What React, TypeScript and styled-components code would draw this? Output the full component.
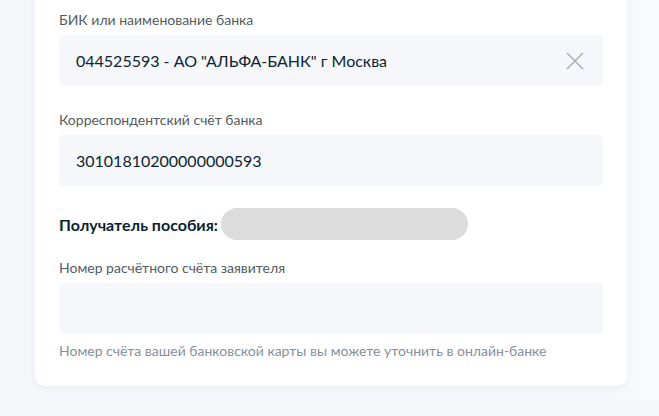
import React from 'react';
import styled, { createGlobalStyle } from 'styled-components';

const GlobalStyle = createGlobalStyle`
  html, body {
    margin: 0;
    padding: 0;
    background: #f4f6fa;
    font-family: Lato, "Noto Sans", sans-serif;
    overflow: hidden;
  }
`;

const Page = styled.div`
  height: 416px;
  padding-left: 35px;
  background: linear-gradient(90deg, #f4f6fa 0%, #f5f7fb 92%, #f8fafd 100%);
`;

const Card = styled.div`
  width: 592px;
  box-sizing: border-box;
  margin-top: -16px;
  padding: 26px 24px 25px;
  background: #fff;
  border-radius: 10px;
  box-shadow: 0 2px 6px rgba(40, 60, 100, 0.06);
  display: flex;
  flex-direction: column;
`;

const Label = styled.div`
  font-size: 14px;
  line-height: 20px;
  color: #535b63;
  margin-bottom: 5px;
`;

const Field = styled.div<{ $mb?: number }>`
  height: 51px;
  box-sizing: border-box;
  padding: 0 16px 0 17px;
  background: #f5f7fa;
  border-radius: 4px;
  display: flex;
  align-items: center;
  justify-content: space-between;
  margin-bottom: ${(p) => p.$mb ?? 0}px;
`;

const Value = styled.span`
  font-size: 16px;
  color: #0b1f33;
`;

const ClearButton = styled.button`
  border: none;
  background: transparent;
  padding: 0;
  width: 24px;
  height: 24px;
  display: flex;
  align-items: center;
  justify-content: center;
  cursor: pointer;
`;

const Recipient = styled.div`
  display: flex;
  align-items: center;
  height: 32px;
  margin-bottom: 18px;
`;

const RecipientTitle = styled.span`
  font-size: 16px;
  font-weight: 700;
  color: #0b1f33;
  margin-right: 3px;
`;

const Hidden = styled.span`
  width: 247px;
  height: 32px;
  border-radius: 16px;
  background: #dcdcdc;
`;

const Hint = styled.div`
  margin-top: 7px;
  font-size: 14px;
  line-height: 20px;
  color: #86909c;
`;

export default function App() {
  return (
    <>
      <GlobalStyle />
      <Page>
        <Card>
          <Label>БИК или наименование банка</Label>
          <Field $mb={24}>
            <Value>044525593 - АО "АЛЬФА-БАНК" г Москва</Value>
            <ClearButton aria-label="Очистить">
              <svg width="18" height="18" viewBox="0 0 18 18" fill="none">
                <path d="M1 1L17 17M17 1L1 17" stroke="#a3abb5" strokeWidth="1.4" />
              </svg>
            </ClearButton>
          </Field>
          <Label>Корреспондентский счёт банка</Label>
          <Field $mb={22}>
            <Value>30101810200000000593</Value>
          </Field>
          <Recipient>
            <RecipientTitle>Получатель пособия:</RecipientTitle>
            <Hidden />
          </Recipient>
          <Label>Номер расчётного счёта заявителя</Label>
          <Field />
          <Hint>Номер счёта вашей банковской карты вы можете уточнить в онлайн-банке</Hint>
        </Card>
      </Page>
    </>
  );
}
